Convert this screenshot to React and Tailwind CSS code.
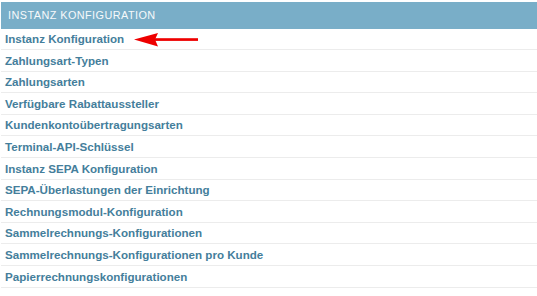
import React from "react";

const items = [
  "Instanz Konfiguration",
  "Zahlungsart-Typen",
  "Zahlungsarten",
  "Verfügbare Rabattaussteller",
  "Kundenkontoübertragungsarten",
  "Terminal-API-Schlüssel",
  "Instanz SEPA Konfiguration",
  "SEPA-Überlastungen der Einrichtung",
  "Rechnungsmodul-Konfiguration",
  "Sammelrechnungs-Konfigurationen",
  "Sammelrechnungs-Konfigurationen pro Kunde",
  "Papierrechnungskonfigurationen",
];

export default function App() {
  return (
    <div
      className="w-[537px] h-[296px] bg-white overflow-hidden pt-[2px] pl-[1px]"
      style={{ fontFamily: '"Liberation Sans", Arial, sans-serif' }}
    >
      <div className="h-[26.5px] bg-[#79aec8] flex items-center px-[7px] text-[10.85px] tracking-[0.45px] uppercase text-[#f6f9fb]">
        Instanz Konfiguration
      </div>
      {items.map((t, i) => (
        <div
          key={t}
          className="relative h-[21.6px] border-b border-[#ececec] flex items-center pl-[4px] text-[11.6px] font-bold text-[#447e9b]"
        >
          {t}
          {i === 0 && (
            <svg
              className="absolute left-[132px] top-[1px]"
              width="70"
              height="20"
              viewBox="0 0 70 20"
            >
              <polygon points="1,9.5 25,3 22,9.5 25,16.5" fill="#ee0000" />
              <rect x="20" y="8.2" width="45" height="2.7" fill="#ee0000" />
            </svg>
          )}
        </div>
      ))}
    </div>
  );
}
